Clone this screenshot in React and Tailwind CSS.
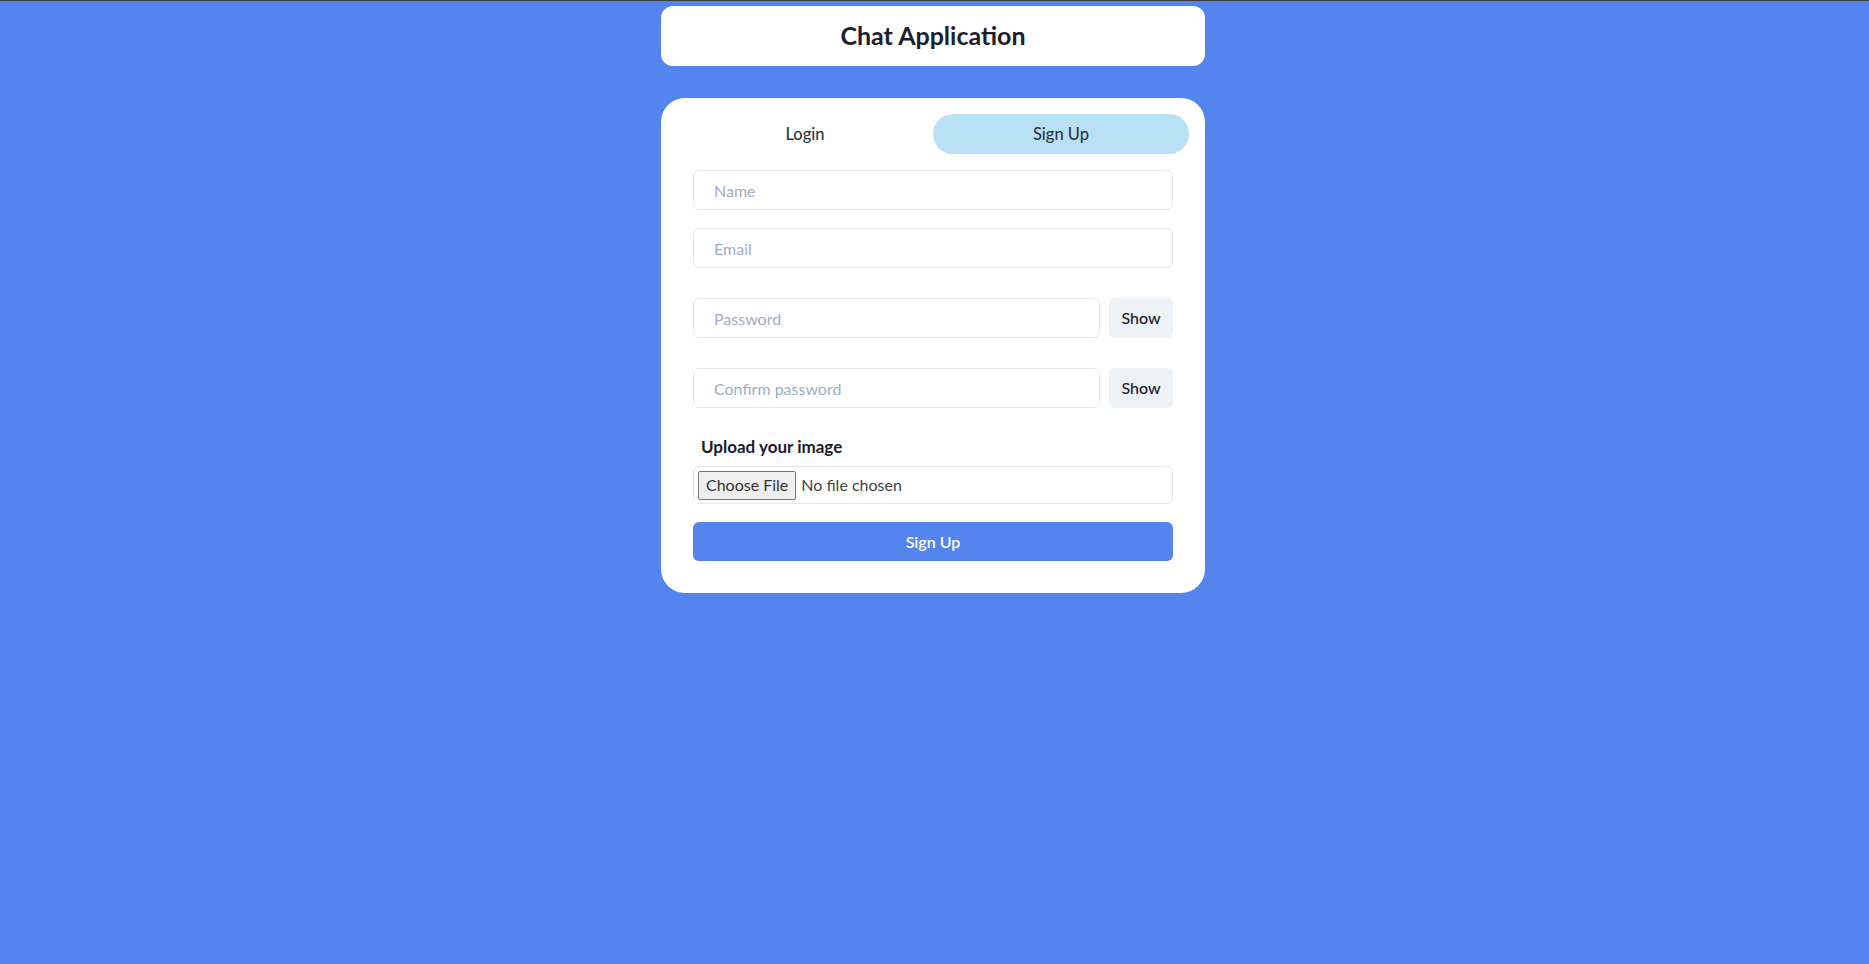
import React, { useState } from "react";

const font = { fontFamily: "Lato, 'Noto Sans', sans-serif" };

const TextField = ({ placeholder, type = "text", value, onChange }) => (
    <input
        type={type}
        value={value}
        onChange={onChange}
        placeholder={placeholder}
        className="h-10 w-full rounded-md border border-[#e2e8f0] bg-white px-5 text-base text-[#1a202c] outline-none placeholder:text-[#a0aec0] focus:border-[#5484ed]"
    />
);

const PasswordField = ({ placeholder, className = "" }) => {
    const [show, setShow] = useState(false);
    const [value, setValue] = useState("");
    return (
        <div className={`flex items-center gap-[9px] ${className}`}>
            <TextField
                type={show ? "text" : "password"}
                placeholder={placeholder}
                value={value}
                onChange={(e) => setValue(e.target.value)}
            />
            <button
                type="button"
                onClick={() => setShow(!show)}
                className="h-10 w-16 shrink-0 rounded-md bg-[#edf2f7] text-base font-medium text-[#1a202c] hover:bg-[#e2e8f0]"
            >
                {show ? "Hide" : "Show"}
            </button>
        </div>
    );
};

export default function App() {
    const [tab, setTab] = useState("signup");
    const [name, setName] = useState("");
    const [email, setEmail] = useState("");

    return (
        <div style={font} className="min-h-screen border-t border-[#3d3d3d] bg-[#5484ed] pr-[3px]">
            <div className="mx-auto w-[576px] px-4">
                {/* Header */}
                <div className="mt-[5px] flex h-[60px] items-center justify-center rounded-xl bg-white">
                    <h1 className="text-[25px] font-bold text-[#1a202c]">Chat Application</h1>
                </div>

                {/* Auth card */}
                <div className="mt-8 rounded-3xl bg-white p-4">
                    <div className="grid grid-cols-2">
                        <button
                            onClick={() => setTab("login")}
                            className={`h-10 rounded-full text-[16.5px] font-medium text-[#2d3748] ${tab === "login" ? "bg-[#b9e1f6]" : ""}`}
                        >
                            Login
                        </button>
                        <button
                            onClick={() => setTab("signup")}
                            className={`h-10 rounded-full text-[16.5px] font-medium text-[#2d3748] ${tab === "signup" ? "bg-[#b9e1f6]" : ""}`}
                        >
                            Sign Up
                        </button>
                    </div>

                    <div className="flex flex-col p-4">
                        {tab === "signup" && (
                            <TextField placeholder="Name" value={name} onChange={(e) => setName(e.target.value)} />
                        )}
                        <div className={tab === "signup" ? "mt-[18px]" : ""}>
                            <TextField placeholder="Email" value={email} onChange={(e) => setEmail(e.target.value)} />
                        </div>
                        <PasswordField placeholder="Password" className="mt-[30px]" />
                        {tab === "signup" && (
                            <>
                                <PasswordField placeholder="Confirm password" className="mt-[30px]" />

                                <label className="mt-[27px] mb-[7px] pl-2 text-[17px] font-bold leading-6 text-[#1a202c]">
                                    Upload your image
                                </label>
                                <div className="flex h-[38px] items-center gap-[5px] rounded-md border border-[#e2e8f0] px-1">
                                    <button
                                        type="button"
                                        className="h-[29px] rounded-[2px] border border-[#767676] bg-[#efefef] px-[7px] text-base text-[#333]"
                                    >
                                        Choose File
                                    </button>
                                    <span className="text-base text-[#444]">No file chosen</span>
                                </div>
                            </>
                        )}

                        <button className="mt-[18px] h-[39px] w-full rounded-md bg-[#5484ed] text-base font-semibold text-white hover:bg-[#4a78dd]">
                            {tab === "signup" ? "Sign Up" : "Login"}
                        </button>
                    </div>
                </div>
            </div>
        </div>
    );
}
